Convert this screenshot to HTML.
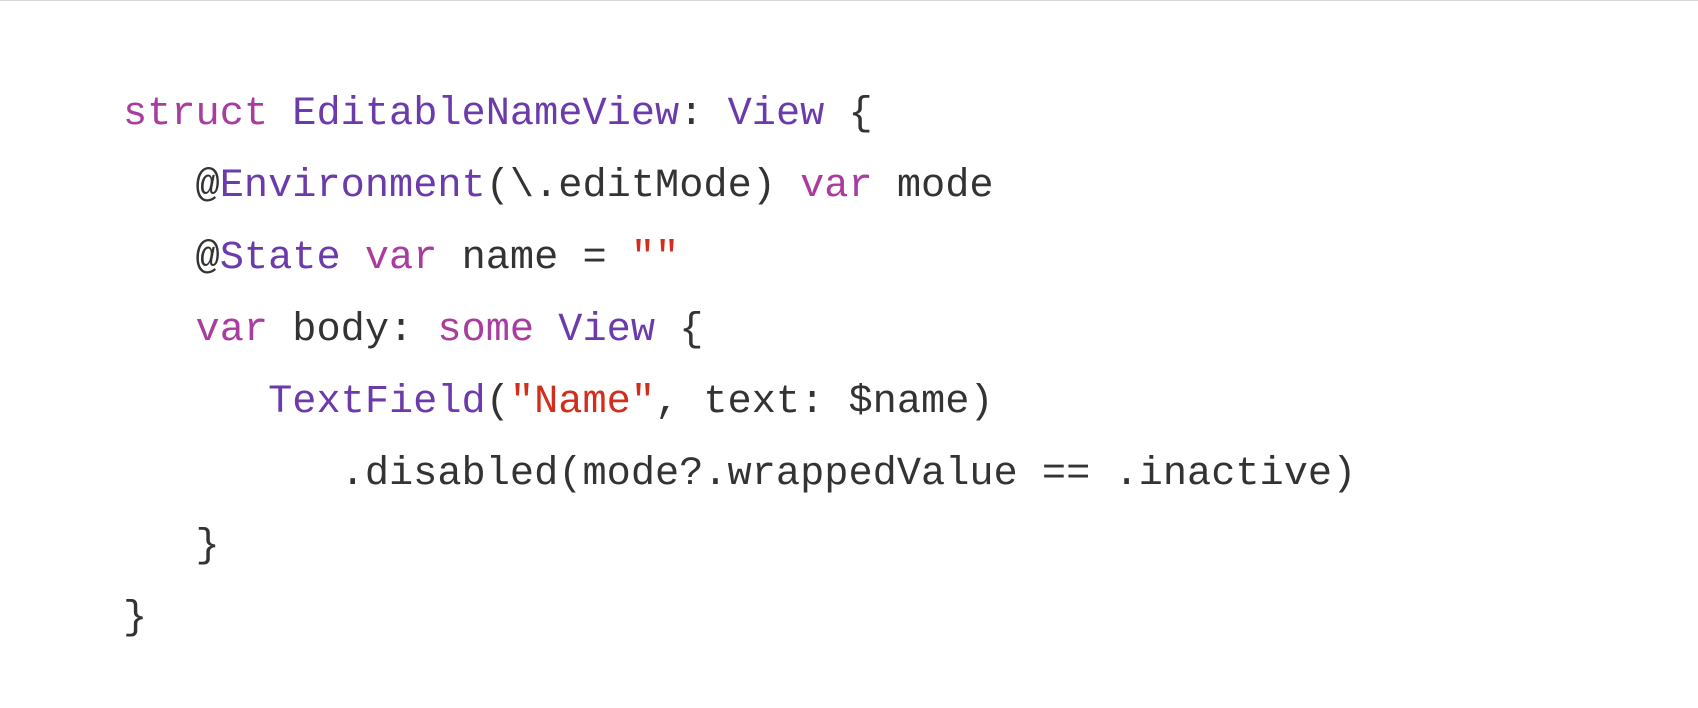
<!DOCTYPE html>
<html><head><style>
html,body{margin:0;padding:0;background:#fff;width:1698px;height:708px;overflow:hidden}
.top{position:absolute;left:0;top:0;width:1698px;height:1px;background:#d6d6d6}
pre{position:absolute;left:123px;top:78px;margin:0;font-family:"Liberation Mono",monospace;font-size:40.3px;line-height:72px;color:#333}
.k{color:#a83c9f}.t{color:#6b3aab}.s{color:#d12f1b}
</style></head><body><div class="top"></div>
<pre><span class="k">struct</span> <span class="t">EditableNameView</span>: <span class="t">View</span> {
   @<span class="t">Environment</span>(\.editMode) <span class="k">var</span> mode
   @<span class="t">State</span> <span class="k">var</span> name = <span class="s">""</span>
   <span class="k">var</span> body: <span class="k">some</span> <span class="t">View</span> {
      <span class="t">TextField</span>(<span class="s">"Name"</span>, text: $name)
         .disabled(mode?.wrappedValue == .inactive)
   }
}</pre>
</body></html>
